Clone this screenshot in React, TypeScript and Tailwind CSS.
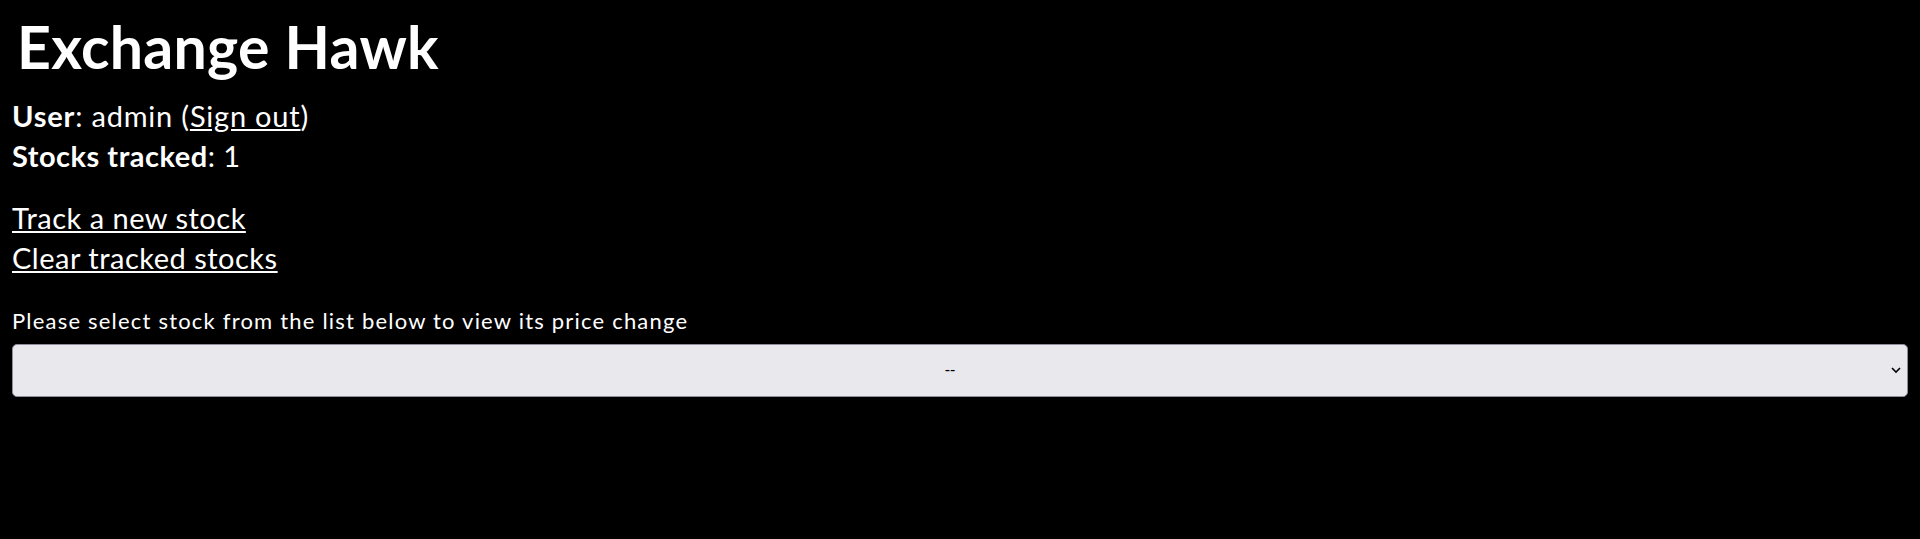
import React from "react";

export default function App() {
  return (
    <div className="min-h-screen bg-black text-white px-3 font-['Lato',sans-serif]">
      <h1 className="pt-[12px] pl-[5px] text-[59px] leading-[1.2] font-bold tracking-[0.3px]">Exchange Hawk</h1>
      <div className="mt-[13px] text-[29px] leading-[40px] tracking-[0.5px]">
        <div className="tracking-[0.8px]">
          <span className="font-bold">User</span>: admin (<a href="#" className="underline">Sign out</a>)
        </div>
        <div>
          <span className="font-bold">Stocks tracked</span>: 1
        </div>
      </div>
      <div className="mt-[22px] text-[29px] leading-[40px] tracking-[0.5px]">
        <div>
          <a href="#" className="underline">Track a new stock</a>
        </div>
        <div>
          <a href="#" className="underline">Clear tracked stocks</a>
        </div>
      </div>
      <label className="block mt-[30px] text-[22px] leading-[26px] tracking-[1.2px]">
        Please select stock from the list below to view its price change
      </label>
      <div className="relative mt-[10px]">
        <select
          defaultValue=""
          className="block w-full h-[53px] appearance-none rounded-[5px] border border-[#8f8f9d] bg-[#e9e9ed] pr-[20px] text-black text-center text-[16px] font-['Liberation_Sans',sans-serif]"
        >
          <option value="">--</option>
        </select>
        <svg
          className="pointer-events-none absolute right-[6px] top-1/2 -translate-y-1/2"
          width="12"
          height="8"
          viewBox="0 0 12 8"
          fill="none"
        >
          <path d="M2 2l4 4 4-4" stroke="#000" strokeWidth="1.6" />
        </svg>
      </div>
    </div>
  );
}
